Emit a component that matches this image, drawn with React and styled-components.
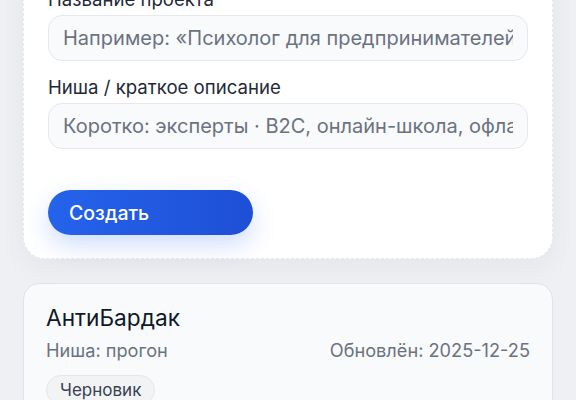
import React from "react";
import styled, { createGlobalStyle } from "styled-components";

const Global = createGlobalStyle`
  html, body { margin: 0; padding: 0; }
  body {
    background: #eff0f3;
    font-family: Inter, "Noto Sans", sans-serif;
    color: #111827;
    overflow: hidden;
  }
`;

const Page = styled.div`
  padding: 0 23px 40px 23px;
  display: flex;
  flex-direction: column;
  gap: 24px;
`;

const FormCard = styled.div`
  margin-top: -37px;
  background: #ffffff;
  border: 1px dashed #e6e8ec;
  border-radius: 22px;
  padding: 24px 24px 23px 24px;
  display: flex;
  flex-direction: column;
  box-shadow: 0 8px 28px rgba(30, 41, 59, 0.05);
`;

const Field = styled.div`
  display: flex;
  flex-direction: column;
  gap: 5px;
  margin-bottom: ${(p) => p.$mb || 0}px;
`;

const Label = styled.label`
  font-size: 18.6px;
  line-height: 22px;
  color: #1f2937;
`;

const Input = styled.input`
  box-sizing: border-box;
  height: 46px;
  width: 100%;
  border: 1px solid #e5e8ee;
  border-radius: 14px;
  background: #f8fafc;
  padding: 0 14px;
  font-family: inherit;
  font-size: 20px;
  color: #111827;
  outline: none;
  &::placeholder { color: #6b7280; }
`;

const Button = styled.button`
  align-self: flex-start;
  margin-top: 41px;
  width: 205px;
  height: 45px;
  border: none;
  border-radius: 999px;
  background: linear-gradient(90deg, #2563eb 0%, #1e4fd6 100%);
  color: #ffffff;
  font-family: inherit;
  font-size: 19.5px;
  font-weight: 500;
  text-align: left;
  padding: 0 21px;
  box-shadow: 0 10px 24px rgba(37, 99, 235, 0.22);
  cursor: pointer;
`;

const ProjectCard = styled.div`
  background: #f8fafc;
  border: 1px solid #dde4ee;
  border-radius: 16px;
  padding: 21px 22px 20px 22px;
  display: flex;
  flex-direction: column;
`;

const Title = styled.div`
  font-size: 22.7px;
  font-weight: 400;
  line-height: 26px;
  color: #111827;
`;

const Meta = styled.div`
  display: flex;
  justify-content: space-between;
  margin-top: 8px;
  font-size: 18.2px;
  line-height: 22px;
  color: #6b7280;
`;

const Chip = styled.span`
  align-self: flex-start;
  margin-top: 14px;
  padding: 4px 13px;
  border: 1px solid #e5e7eb;
  background: #f1f3f5;
  border-radius: 999px;
  font-size: 17px;
  line-height: 20px;
  color: #374151;
`;

export default function App() {
  return (
    <>
      <Global />
      <Page>
        <FormCard>
          <Field $mb={15}>
            <Label>Название проекта</Label>
            <Input placeholder="Например: «Психолог для предпринимателей»" />
          </Field>
          <Field>
            <Label>Ниша / краткое описание</Label>
            <Input placeholder="Коротко: эксперты · B2C, онлайн-школа, офлайн-услуги" />
          </Field>
          <Button>Создать</Button>
        </FormCard>
        <ProjectCard>
          <Title>АнтиБардак</Title>
          <Meta>
            <span>Ниша: прогон</span>
            <span>Обновлён: 2025-12-25</span>
          </Meta>
          <Chip>Черновик</Chip>
        </ProjectCard>
      </Page>
    </>
  );
}
